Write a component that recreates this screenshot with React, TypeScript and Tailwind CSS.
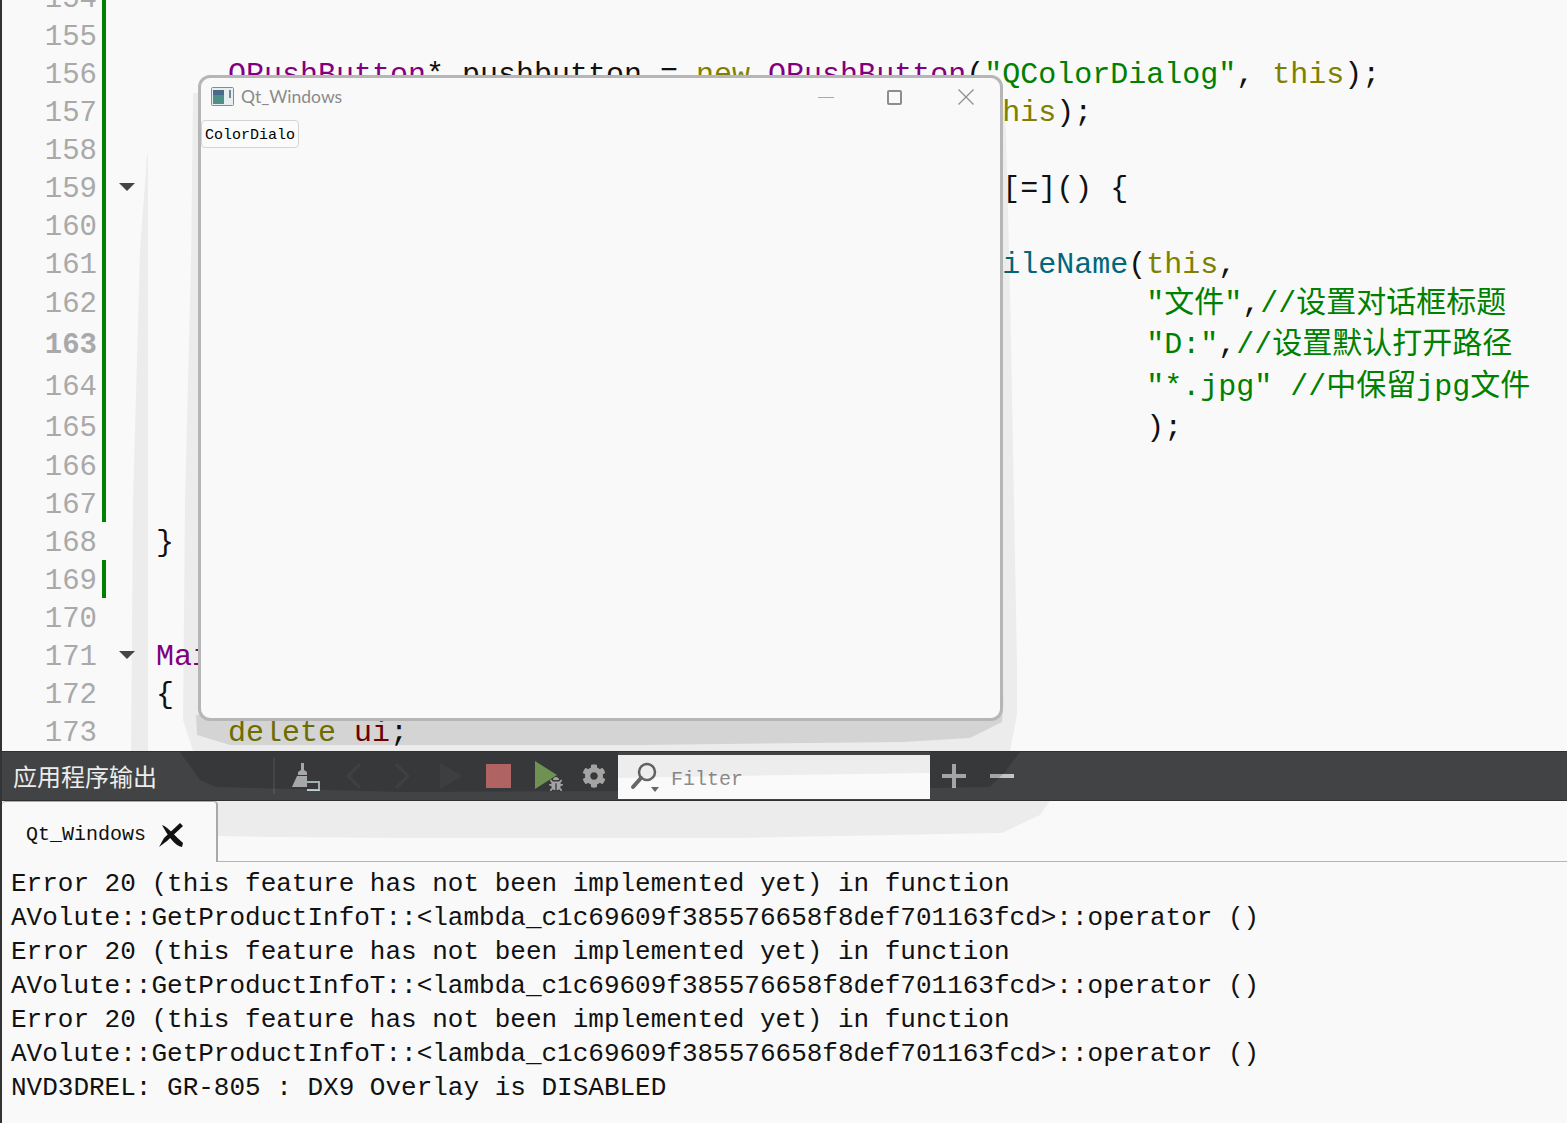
import React from 'react';
import { FaCog, FaBug } from 'react-icons/fa';

type Seg = [string, string];

const BLACK = 'text-[#111]';
const PURPLE = 'text-[#800080]';
const OLIVE = 'text-[#808000]';
const GREEN = 'text-[#008000]';
const TEAL = 'text-[#00677c]';
const MAROON = 'text-[#800000]';

const pad = (n: number) => ' '.repeat(n);

interface Line {
    no: number;
    h: number;
    changed: boolean;
    fold?: boolean;
    bold?: boolean;
    code?: Seg[];
}

const lines: Line[] = [
    { no: 154, h: 38, changed: true },
    { no: 155, h: 38, changed: true },
    {
        no: 156, h: 38, changed: true, code: [
            [pad(4) + 'QPushButton', PURPLE],
            ['* pushbutton = ', BLACK],
            ['new ', OLIVE],
            ['QPushButton', PURPLE],
            ['(', BLACK],
            ['"QColorDialog"', GREEN],
            [', ', BLACK],
            ['this', OLIVE],
            [');', BLACK],
        ],
    },
    { no: 157, h: 38, changed: true, code: [[pad(47) + 'his', OLIVE], [');', BLACK]] },
    { no: 158, h: 38, changed: true },
    { no: 159, h: 38, changed: true, fold: true, code: [[pad(47) + '[=]() {', BLACK]] },
    { no: 160, h: 38, changed: true },
    { no: 161, h: 38, changed: true, code: [[pad(47) + 'ileName', TEAL], ['(', BLACK], ['this', OLIVE], [',', BLACK]] },
    { no: 162, h: 40, changed: true, code: [[pad(55) + '"文件"', GREEN], [',', BLACK], ['//设置对话框标题', GREEN]] },
    { no: 163, h: 42, changed: true, bold: true, code: [[pad(55) + '"D:"', GREEN], [',', BLACK], ['//设置默认打开路径', GREEN]] },
    { no: 164, h: 42, changed: true, code: [[pad(55) + '"*.jpg" //中保留jpg文件', GREEN]] },
    { no: 165, h: 40, changed: true, code: [[pad(55) + ');', BLACK]] },
    { no: 166, h: 38, changed: true },
    { no: 167, h: 38, changed: true },
    { no: 168, h: 38, changed: false, code: [['}', BLACK]] },
    { no: 169, h: 38, changed: true },
    { no: 170, h: 38, changed: false },
    { no: 171, h: 38, changed: false, fold: true, code: [['Mai', PURPLE]] },
    { no: 172, h: 38, changed: false, code: [['{', BLACK]] },
    { no: 173, h: 38, changed: false, code: [[pad(4) + 'delete ', OLIVE], ['ui', MAROON], [';', BLACK]] },
];

const output = [
    'Error 20 (this feature has not been implemented yet) in function',
    'AVolute::GetProductInfoT::<lambda_c1c69609f385576658f8def701163fcd>::operator ()',
    'Error 20 (this feature has not been implemented yet) in function',
    'AVolute::GetProductInfoT::<lambda_c1c69609f385576658f8def701163fcd>::operator ()',
    'Error 20 (this feature has not been implemented yet) in function',
    'AVolute::GetProductInfoT::<lambda_c1c69609f385576658f8def701163fcd>::operator ()',
    'NVD3DREL: GR-805 : DX9 Overlay is DISABLED',
];

function EditorRow({ line }: { line: Line }) {
    return (
        <div className="flex items-center" style={{ height: line.h }}>
            <span className={`w-[95px] shrink-0 pt-[6px] text-right text-[29px] text-[#a9a9a9] ${line.bold ? 'font-bold' : ''}`}>
                {line.no}
            </span>
            <span className={`ml-[5px] h-full w-[4px] shrink-0 ${line.changed ? 'bg-[#008000]' : ''}`} />
            <span className="flex w-[50px] shrink-0 pl-[13px]">
                {line.fold && (
                    <svg width="16" height="8" viewBox="0 0 16 8">
                        <path d="M0 0H16L8 8Z" fill="#444" />
                    </svg>
                )}
            </span>
            <span className="pt-[4px] text-[30px] leading-none whitespace-pre">
                {line.code?.map(([text, color], i) => (
                    <span key={i} className={color}>{text}</span>
                ))}
            </span>
        </div>
    );
}

function QtWindow() {
    return (
        <div className="absolute left-[196px] top-[75px] z-20 flex h-[646px] w-[805px] flex-col rounded-[12px] border-[3px] border-[#b6b6b6] bg-[#f9f9f9]">
            <div className="flex h-[42px] shrink-0 items-center pb-[4px] pl-[10px]">
                <svg width="24" height="20" viewBox="0 0 24 20">
                    <rect x="0.5" y="0.5" width="22" height="18" rx="1" fill="#e8eef0" stroke="#7b8f96" />
                    <rect x="2" y="3" width="11" height="14" fill="#4f8f8a" />
                    <rect x="2" y="3" width="11" height="5" fill="#4a6a8c" />
                    <rect x="18" y="3" width="2" height="8" fill="#6d8a94" />
                </svg>
                <span className="ml-[6px] w-[100px] whitespace-nowrap font-['Lato',sans-serif] text-[17.5px] text-[#8a8a8a]">Qt_Windows</span>
                <span className="ml-[477px] h-px w-[16px] bg-[#a8a8a8]" />
                <span className="ml-[53px] h-[15px] w-[15px] rounded-[2px] border-2 border-[#8d8d8d]" />
                <svg className="ml-[56px]" width="16" height="16" viewBox="0 0 16 16">
                    <path d="M0.5 0.5L15.5 15.5M15.5 0.5L0.5 15.5" stroke="#8d8d8d" strokeWidth="1.2" />
                </svg>
            </div>
            <button className="flex h-[28px] w-[98px] items-center justify-center rounded-[4px] border border-[#d4d4d4] bg-[#fbfbfb] pt-[4px] text-[15px] text-black">
                ColorDialo
            </button>
        </div>
    );
}

function ToolbarIcons() {
    return (
        <>
            <svg className="ml-[16px]" width="30" height="30" viewBox="0 0 30 30">
                <path d="M10 2H13V9L16 11V14H7V11L10 9Z" fill="#c8c8c8" />
                <path d="M6 15H16V26H1Z" fill="#c8c8c8" />
                <path d="M16 21H28V29H16" fill="none" stroke="#c3d0d4" strokeWidth="2" />
            </svg>
            <svg className="ml-[24px]" width="18" height="28" viewBox="0 0 18 28">
                <path d="M15 2L3 14L15 26" fill="none" stroke="#4c4d50" strokeWidth="3" />
            </svg>
            <svg className="ml-[30px]" width="18" height="28" viewBox="0 0 18 28">
                <path d="M3 2L15 14L3 26" fill="none" stroke="#4c4d50" strokeWidth="3" />
            </svg>
            <svg className="ml-[29px]" width="24" height="28" viewBox="0 0 24 28">
                <path d="M0 1L23 14L0 27Z" fill="#4a4b4e" />
            </svg>
            <span className="ml-[22px] h-[24px] w-[25px] bg-[#d27676]" />
            <span className="relative ml-[24px] h-[30px] w-[28px]">
                <svg width="24" height="28" viewBox="0 0 24 28">
                    <path d="M0 0L22 14L0 28Z" fill="#85ad62" />
                </svg>
                <FaBug className="absolute bottom-0 right-0 text-[14px] text-[#c4c4c4]" />
            </span>
            <FaCog className="ml-[19px] text-[24px] text-[#c4c4c4]" />
        </>
    );
}

function Toolbar() {
    return (
        <div className="flex h-[50px] shrink-0 items-center border-y border-[#303133] bg-[#424344] font-['Noto_Sans_CJK_SC',sans-serif]">
            <span className="ml-[11px] w-[260px] text-[24px] leading-none text-[#ececec]">应用程序输出</span>
            <span className="h-[36px] w-[2px] bg-[#515257]" />
            <ToolbarIcons />
            <div className="ml-[12px] mt-[1px] flex h-[44px] w-[312px] items-center bg-[#fafafa] pl-[12px]">
                <svg width="32" height="32" viewBox="0 0 32 32">
                    <circle cx="17" cy="11" r="8" fill="none" stroke="#666" strokeWidth="2.5" />
                    <path d="M11 17L3 26" stroke="#666" strokeWidth="4" strokeLinecap="round" />
                    <path d="M21 26H29L25 31Z" fill="#666" />
                </svg>
                <span className="ml-[9px] pt-[6px] font-['Liberation_Mono',monospace] text-[20px] text-[#8c8c8c]">Filter</span>
            </div>
            <svg className="ml-[12px]" width="24" height="24" viewBox="0 0 24 24">
                <path d="M0 12H24M12 0V24" stroke="#c4c4c4" strokeWidth="4" />
            </svg>
            <span className="ml-[24px] h-[4px] w-[24px] bg-[#c4c4c4]" />
        </div>
    );
}

// stepped window shadow as it shows in the capture, laid over everything below the dialog
function ShadowBands() {
    return (
        <svg className="pointer-events-none absolute left-0 top-0 z-10" width="1565" height="1123" viewBox="0 0 1565 1123">
            <g fill="#000" fillOpacity="0.05">
                <path d="M145 155L146 155L146 751L129 751L131 500L138 250Z" />
                <path d="M191 93L189 260L183 500L181 720L191 751H1008L1015 715V660L1008 290L1004 130L1000 93Z" />
                <path d="M215 801H1048L1038 815L1000 833L740 838H400L270 837L215 836Z" />
                <path d="M616 755H928V773L788 775L616 778Z" />
            </g>
            <path d="M194 715L195 735L228 745H640L900 742L968 738L1000 722L1003 680L1000 715Z" fill="#000" fillOpacity="0.1" />
            <path d="M178 752H616V791L400 792L214 787L198 780Z" fill="#000" fillOpacity="0.16" />
            <path d="M928 752H1018L1003 772L988 787L928 788Z" fill="#000" fillOpacity="0.16" />
        </svg>
    );
}

export default function App() {
    return (
        <div className="relative h-[1123px] w-[1567px] overflow-hidden border-l-2 border-[#333] bg-[#f9f9f9] font-['Liberation_Mono','Noto_Sans_CJK_SC',monospace]">
            <div className="flex h-[1123px] flex-col">
                <div className="h-[751px] shrink-0 overflow-hidden">
                    <div className="-mt-[22px]">
                        {lines.map(line => <EditorRow key={line.no} line={line} />)}
                    </div>
                </div>
                <Toolbar />
                <div className="flex h-[61px] shrink-0 border-b border-[#b5b5b5]">
                    <div className="relative z-20 -mb-px flex w-[216px] items-center rounded-t-[4px] border-r-2 border-t border-[#a9a9a9] bg-[#f9f9f9] pl-[24px] pt-[6px] text-[20px] text-[#111]">
                        Qt_Windows
                        <svg className="ml-[12px]" width="26" height="24" viewBox="0 0 26 24">
                            <path d="M22 0L25 3L9 18L1 24L6 15Z" fill="#111" />
                            <path d="M4 2C10 4 18 14 25 20L24 24C17 23 10 13 4 2Z" fill="#111" />
                        </svg>
                    </div>
                </div>
                <div className="pl-[9px] pt-[5px] text-[26px] leading-[34px] text-[#111]">
                    {output.map((text, i) => <div key={i} className="whitespace-pre">{text}</div>)}
                </div>
            </div>
            <ShadowBands />
            <QtWindow />
        </div>
    );
}
